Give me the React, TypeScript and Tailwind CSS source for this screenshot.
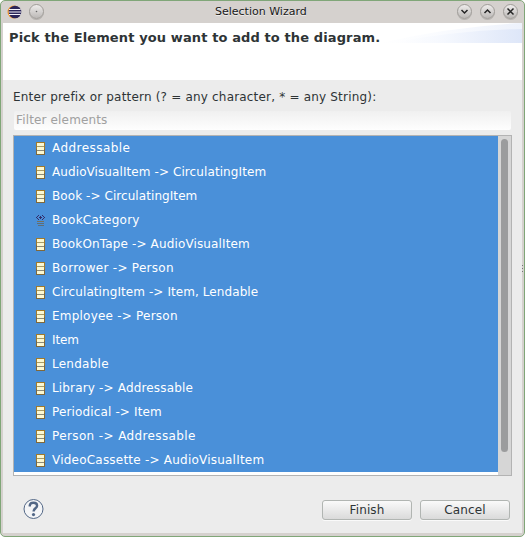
import React from "react";

const elements = [
  { name: "Addressable", spacing: "tracking-[0.45px]" },
  { name: "AudioVisualItem -> CirculatingItem", spacing: "tracking-[0.09px]" },
  { name: "Book -> CirculatingItem", spacing: "tracking-[0.07px]" },
  { name: "BookCategory", kind: "enum", spacing: "tracking-[0.25px]" },
  { name: "BookOnTape -> AudioVisualItem", spacing: "tracking-[0.14px]" },
  { name: "Borrower -> Person", spacing: "tracking-[0.28px]" },
  { name: "CirculatingItem -> Item, Lendable", spacing: "tracking-[0.08px]" },
  { name: "Employee -> Person", spacing: "tracking-[0.22px]" },
  { name: "Item", spacing: "tracking-[-0.1px]" },
  { name: "Lendable", spacing: "tracking-[0.25px]" },
  { name: "Library -> Addressable", spacing: "tracking-[0.16px]" },
  { name: "Periodical -> Item", spacing: "tracking-[0.14px]" },
  { name: "Person -> Addressable", spacing: "tracking-[0.38px]" },
  { name: "VideoCassette -> AudioVisualItem", spacing: "tracking-[0.22px]" },
];

function ClassIcon() {
  return (
    <svg className="shrink-0" width="9" height="13" viewBox="0 0 9 13" shapeRendering="crispEdges">
      <rect width="9" height="13" fill="#80683a" />
      <rect width="9" height="7" fill="#a07a2c" />
      <rect x="1" y="1" width="7" height="11" fill="#fbf8d2" />
      <path d="M1 4.5h7" stroke="#a79b68" />
      <path d="M1 8.5h7" stroke="#8d8a78" />
    </svg>
  );
}

function EnumIcon() {
  return (
    <svg className="shrink-0" width="9" height="13" viewBox="0 0 9 13" shapeRendering="crispEdges">
      <path d="M2 1h1v1H2zM6 1h1v1H6zM1 2h1v1H1zM7 2h1v1H7zM0 3h1v1H0zM8 3h1v1H8zM1 4h1v1H1zM7 4h1v1H7zM4 2h1v3H4zM3 3h3v1H3zM2 5h1v1H2zM6 5h1v1H6z" fill="#332d6c" />
      <path d="M1 7.5h7" stroke="#78705c" />
      <path d="M1 9.5h7M2 11.5h6" stroke="#606e74" />
    </svg>
  );
}

function RoundButton({ children }: { children: React.ReactNode }) {
  return (
    <span className="flex h-[15px] w-[15px] items-center justify-center rounded-full border border-[#a09d99] bg-linear-to-b from-[#eeeceb] to-[#bcb9b7] shadow-[0_1px_0_#b5b2af]">
      <svg className="shrink-0" width="13" height="13" viewBox="0 0 13 13" fill="none" stroke="#252525" strokeWidth="1.5">
        {children}
      </svg>
    </span>
  );
}

function EclipseLogo() {
  return (
    <svg width="15" height="14" viewBox="0 0 15 14">
      <circle cx="7" cy="7" r="6.5" fill="#f79423" />
      <circle cx="8" cy="7" r="6.3" fill="#2b2559" />
      <path d="M2 4.5h11.6M1.6 7h12.6M2 9.5h11.6" stroke="#f4f2fa" strokeWidth="1.2" />
    </svg>
  );
}

function PushButton({ label }: { label: string }) {
  return (
    <button className="h-5 w-[90px] rounded-[3px] border border-[#b1b5b2] bg-linear-to-b from-[#fafafa] to-[#dadada] text-center text-[12px] leading-[18px] tracking-[0.1px] text-[#2e3436] shadow-[0_1px_0_#fafafa]">
      {label}
    </button>
  );
}

export default function App() {
  return (
    <div className="h-[537px] w-[525px] bg-white font-['DejaVu_Sans',sans-serif] text-[#2e3436]">
      <div className="flex h-[537px] w-[525px] flex-col rounded-[5px] border border-[#80a678] bg-[#d5d1ce] pr-[2px] pb-[3px] pl-[2px]">
        <header className="flex h-[22px] shrink-0 items-center justify-between pr-[4px] pb-px pl-[4px]">
          <div className="flex w-[66px] items-center gap-[7px]">
            <EclipseLogo />
            <RoundButton>
              <circle cx="6.5" cy="6.5" r=".8" fill="#666" stroke="none" />
            </RoundButton>
          </div>
          <h1 className="w-[92px] translate-x-[-4px] text-[11px] leading-[21px] whitespace-nowrap text-[#181818] [text-shadow:0_1px_0_#efedeb]">Selection Wizard</h1>
          <div className="flex gap-[8px]">
            <RoundButton><path d="m3.5 5 3 3 3-3" /></RoundButton>
            <RoundButton><path d="m3.5 8 3-3 3 3" /></RoundButton>
            <RoundButton><path d="m3.5 3.5 6 6m0-6-6 6" /></RoundButton>
          </div>
        </header>

        <section className="relative h-[57px] shrink-0 bg-white">
          <svg className="absolute top-0 right-0" width="142" height="20" viewBox="0 0 142 20">
            <defs>
              <linearGradient id="sweep">
                <stop stopColor="#fff" />
                <stop offset=".4" stopColor="#f5f8fe" />
                <stop offset="1" stopColor="#dce5f8" />
              </linearGradient>
            </defs>
            <path d="M0 20Q75 3 142 0V20Z" fill="url(#sweep)" opacity=".5" />
            <path d="M10 20Q80 7 142 6V20Z" fill="url(#sweep)" opacity=".9" />
          </svg>
          <h2 className="relative pt-[6px] pl-[6px] text-[13px] leading-[17px] font-bold tracking-[0.115px] whitespace-nowrap">Pick the Element you want to add to the diagram.</h2>
        </section>

        <main className="min-h-0 flex-1 bg-[#ececec] pr-[10px] pl-[10px]">
          <p className="h-[31px] pt-[9px] text-[12px] leading-[17px] tracking-[0.19px] whitespace-nowrap">Enter prefix or pattern (? = any character, * = any String):</p>
          <div className="mr-px ml-px h-[19px] rounded-[2px] bg-linear-to-b from-[#f0f0f0] to-[#fefefe] pl-[2px] text-[12px] leading-[18px] tracking-[0.15px] text-[#a0a0a0]">Filter elements</div>
          <div className="mt-[5px] flex h-[341px] border border-[#b3b3b3] bg-white">
            <ul className="flex-1">
              {elements.map((item) => (
                <li key={item.name} className="flex h-6 items-start bg-[#4a90d9] pt-[6px] pl-[22px] text-[12px] leading-6 whitespace-nowrap text-white">
                  {item.kind === "enum" ? <EnumIcon /> : <ClassIcon />}
                  <span className={`-mt-[6px] ml-[7px] ${item.spacing}`}>{item.name}</span>
                </li>
              ))}
            </ul>
            <div className="w-[13px] bg-[#d6d6d6] pt-[3px] pl-[3px]">
              <div className="h-[313px] w-[7px] rounded-full bg-[#9b9c9d]" />
            </div>
          </div>
          <footer className="mt-6 flex items-start pr-[2px] pl-[10px]">
            <svg className="-mt-px" width="21" height="21" viewBox="0 0 21 21" fill="none">
              <circle cx="10.5" cy="10" r="9.5" fill="#f4f5f7" stroke="#526786" />
              <path d="M6.8 7.6V6.2C7.2 4.4 8.6 3.8 10.4 3.8c2.1 0 3.7 1 3.7 2.9 0 2.6-3.5 2.5-3.5 5.8" stroke="#526786" strokeWidth="2.4" />
              <circle cx="10.5" cy="15.6" r="1.6" fill="#526786" />
            </svg>
            <div className="ml-auto flex gap-2">
              <PushButton label="Finish" />
              <PushButton label="Cancel" />
            </div>
          </footer>
        </main>
      </div>
      <div className="absolute top-[265px] left-[522px] flex flex-col gap-[2px]">
        <i className="h-px w-px bg-[#777]" />
        <i className="h-px w-px bg-[#777]" />
        <i className="h-px w-px bg-[#777]" />
      </div>
    </div>
  );
}
